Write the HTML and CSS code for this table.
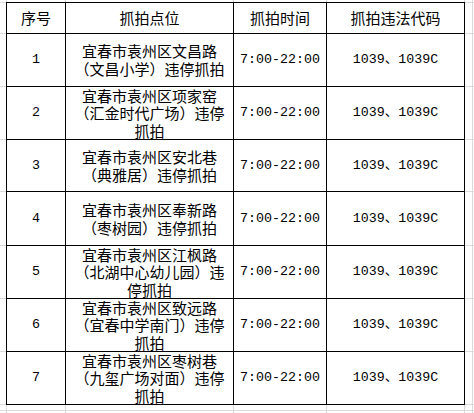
FILE: index.html
```html
<!DOCTYPE html>
<html lang="zh-CN">
<head>
<meta charset="utf-8">
<title>抓拍点位</title>
<link rel="stylesheet" href="styles.css">
</head>
<body>
<div class="sheet">
  <div class="table">
    <div class="cell cjk">序号</div>
    <div class="cell cjk">抓拍点位</div>
    <div class="cell cjk">抓拍时间</div>
    <div class="cell cjk">抓拍违法代码</div>

    <div class="cell num">1</div>
    <div class="cell cjk addr">宜春市袁州区文昌路（文昌小学）违停抓拍</div>
    <div class="cell num">7:00-22:00</div>
    <div class="cell num">1039、1039C</div>

    <div class="cell num">2</div>
    <div class="cell cjk addr">宜春市袁州区项家窑（汇金时代广场）违停抓拍</div>
    <div class="cell num">7:00-22:00</div>
    <div class="cell num">1039、1039C</div>

    <div class="cell num">3</div>
    <div class="cell cjk addr">宜春市袁州区安北巷（典雅居）违停抓拍</div>
    <div class="cell num">7:00-22:00</div>
    <div class="cell num">1039、1039C</div>

    <div class="cell num">4</div>
    <div class="cell cjk addr">宜春市袁州区奉新路（枣树园）违停抓拍</div>
    <div class="cell num">7:00-22:00</div>
    <div class="cell num">1039、1039C</div>

    <div class="cell num">5</div>
    <div class="cell cjk addr">宜春市袁州区江枫路（北湖中心幼儿园）违停抓拍</div>
    <div class="cell num">7:00-22:00</div>
    <div class="cell num">1039、1039C</div>

    <div class="cell num">6</div>
    <div class="cell cjk addr">宜春市袁州区致远路（宜春中学南门）违停抓拍</div>
    <div class="cell num">7:00-22:00</div>
    <div class="cell num">1039、1039C</div>

    <div class="cell num">7</div>
    <div class="cell cjk addr">宜春市袁州区枣树巷（九玺广场对面）违停抓拍</div>
    <div class="cell num">7:00-22:00</div>
    <div class="cell num">1039、1039C</div>
  </div>
</div>
</body>
</html>
```
FILE: styles.css
```css
html, body {
  margin: 0;
  padding: 0;
  background: #ffffff;
}

.sheet {
  width: 474px;
  height: 413px;
  box-sizing: border-box;
  padding: 2px 0 0 6px;
  background-color: #ffffff;
  background-image:
    linear-gradient(#dadada, #dadada),
    linear-gradient(#dadada, #dadada),
    linear-gradient(#dadada, #dadada),
    linear-gradient(#dadada, #dadada),
    linear-gradient(#dadada, #dadada),
    linear-gradient(#dadada, #dadada),
    linear-gradient(#dadada, #dadada),
    linear-gradient(#dadada, #dadada),
    linear-gradient(#dadada, #dadada),
    linear-gradient(#dadada, #dadada),
    linear-gradient(#dadada, #dadada),
    linear-gradient(#dadada, #dadada),
    linear-gradient(#dadada, #dadada),
    linear-gradient(#dadada, #dadada),
    linear-gradient(#dadada, #dadada),
    linear-gradient(#dadada, #dadada);
  background-repeat: no-repeat;
  background-size:
    100% 1px, 100% 1px, 100% 1px, 100% 1px, 100% 1px,
    100% 1px, 100% 1px, 100% 1px, 100% 1px, 100% 1px,
    1px 100%, 1px 100%, 1px 100%, 1px 100%, 1px 100%, 1px 100%;
  background-position:
    0 2px, 0 33px, 0 86px, 0 139px, 0 191px,
    0 245px, 0 298px, 0 351px, 0 404px, 0 410px,
    6px 0, 65px 0, 233px 0, 326px 0, 464px 0, 472px 0;
}

.table {
  display: grid;
  width: max-content;
  grid-template-columns: 59px 168px 93px 138px;
  grid-template-rows: 31px 53px 53px 52px 54px 53px 53px 53px;
  border-top: 1px solid #000;
  border-left: 1px solid #000;
  background: #ffffff;
  color: #000;
}

.cell {
  box-sizing: border-box;
  display: flex;
  align-items: center;
  justify-content: center;
  text-align: center;
  border-right: 1px solid #000;
  border-bottom: 1px solid #000;
  padding: 0 4px;
}

.cjk {
  font-family: "Noto Sans CJK SC", sans-serif;
  font-size: 15px;
  line-height: 18px;
}

.addr {
  line-height: 17.6px;
}

.num {
  font-family: "Liberation Mono", "Noto Sans CJK SC", monospace;
  font-size: 13.33px;
  line-height: 18px;
  white-space: nowrap;
}
```
